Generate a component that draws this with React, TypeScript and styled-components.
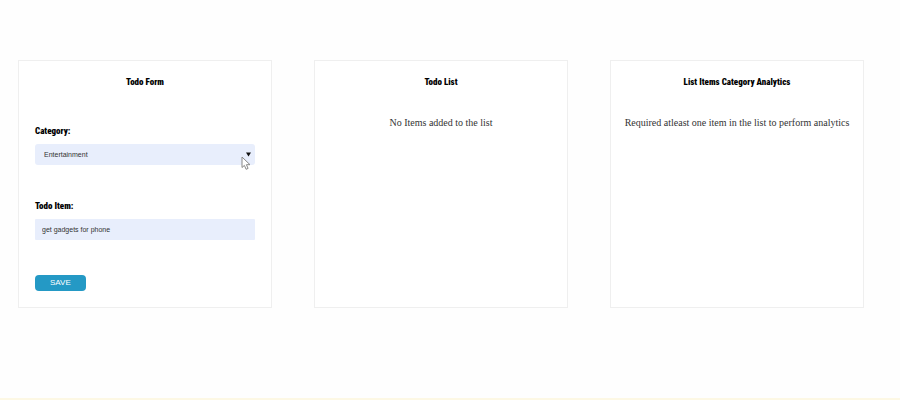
import React, { useState } from "react";
import styled, { createGlobalStyle } from "styled-components";

const GlobalStyle = createGlobalStyle`
  *, *::before, *::after { box-sizing: border-box; }
  body {
    margin: 0;
    background: #fefefe;
    font-family: "Liberation Serif", "Times New Roman", serif;
  }
`;

const Page = styled.div`
  display: flex;
  flex-direction: column;
  min-height: 100vh;
  border-bottom: 2px solid #fdf8e4;
`;

const Board = styled.main`
  display: grid;
  grid-template-columns: repeat(3, minmax(0, 1fr));
  gap: 42px;
  padding: 60px 36px 60px 18px;
`;

const Card = styled.section`
  display: flex;
  flex-direction: column;
  padding: 15px 10px 16px;
  border: 1px solid #efefef;
  background: #fff;
`;

const Title = styled.h2`
  margin: 0;
  font: 900 9px/12px Impact, "Roboto Condensed", "Open Sans Condensed", "Liberation Sans Narrow", sans-serif;
  color: #000;
  text-align: center;
`;

const Message = styled.p`
  margin: 27px 0 0;
  font-size: 10px;
  line-height: 16px;
  color: #333;
  text-align: center;
`;

const Form = styled.form`
  display: flex;
  flex-direction: column;
  align-items: flex-start;
  padding: 37px 6px 0;
`;

const Field = styled.div`
  display: flex;
  flex-direction: column;
  gap: 7px;
  width: 100%;
  margin-bottom: 35px;
`;

const Label = styled.label`
  font: 900 9px/12px Impact, "Roboto Condensed", "Open Sans Condensed", "Liberation Sans Narrow", sans-serif;
  color: #000;
`;

const SelectWrap = styled.div`
  position: relative;
`;

const Select = styled.select`
  appearance: none;
  display: block;
  width: 100%;
  height: 21px;
  padding: 0 20px 0 9px;
  border: 0;
  border-radius: 3px;
  background: #e8eefc;
  font: 7px "Liberation Sans", Arial, sans-serif;
  color: #333;
`;

const Arrow = styled.svg`
  position: absolute;
  top: 8px;
  right: 4px;
  width: 5px;
  height: 5px;
  pointer-events: none;
`;

const Pointer = styled.svg`
  position: absolute;
  top: 12px;
  right: 4px;
  width: 10px;
  height: 14px;
  pointer-events: none;
`;

const TextInput = styled.input`
  width: 100%;
  height: 21px;
  padding: 0 7px;
  border: 0;
  border-radius: 1px;
  background: #e8eefc;
  font: 7px/21px "Liberation Sans", Arial, sans-serif;
  color: #333;
`;

const SaveButton = styled.button`
  height: 16px;
  padding: 0 15px;
  border: 0;
  border-radius: 4px;
  background: #2499c5;
  font: 8px/16px "Liberation Sans", Arial, sans-serif;
  color: #fff;
`;

export default function App() {
  const [category, setCategory] = useState("Entertainment");
  const [item, setItem] = useState("get gadgets for phone");

  return (
    <Page>
      <GlobalStyle />
      <Board>
        <Card>
          <Title>Todo Form</Title>
          <Form onSubmit={(event) => event.preventDefault()}>
            <Field>
              <Label htmlFor="category">Category:</Label>
              <SelectWrap>
                <Select
                  id="category"
                  value={category}
                  onChange={(event) => setCategory(event.target.value)}
                >
                  <option>Entertainment</option>
                </Select>
                <Arrow viewBox="0 0 5 5" aria-hidden="true">
                  <path d="M0 0.5h5L2.5 4.5z" fill="#111" />
                </Arrow>
                <Pointer viewBox="0 0 10 14" aria-hidden="true">
                  <path
                    d="M1 1v10.5l2.4-2.1 1.7 3.9 2-0.9-1.7-3.7H9z"
                    fill="#fff"
                    stroke="#888"
                    strokeWidth="1"
                    strokeLinejoin="round"
                  />
                </Pointer>
              </SelectWrap>
            </Field>
            <Field>
              <Label htmlFor="item">Todo Item:</Label>
              <TextInput
                id="item"
                type="text"
                value={item}
                onChange={(event) => setItem(event.target.value)}
              />
            </Field>
            <SaveButton type="submit">SAVE</SaveButton>
          </Form>
        </Card>
        <Card>
          <Title>Todo List</Title>
          <Message>No Items added to the list</Message>
        </Card>
        <Card>
          <Title>List Items Category Analytics</Title>
          <Message>Required atleast one item in the list to perform analytics</Message>
        </Card>
      </Board>
    </Page>
  );
}
